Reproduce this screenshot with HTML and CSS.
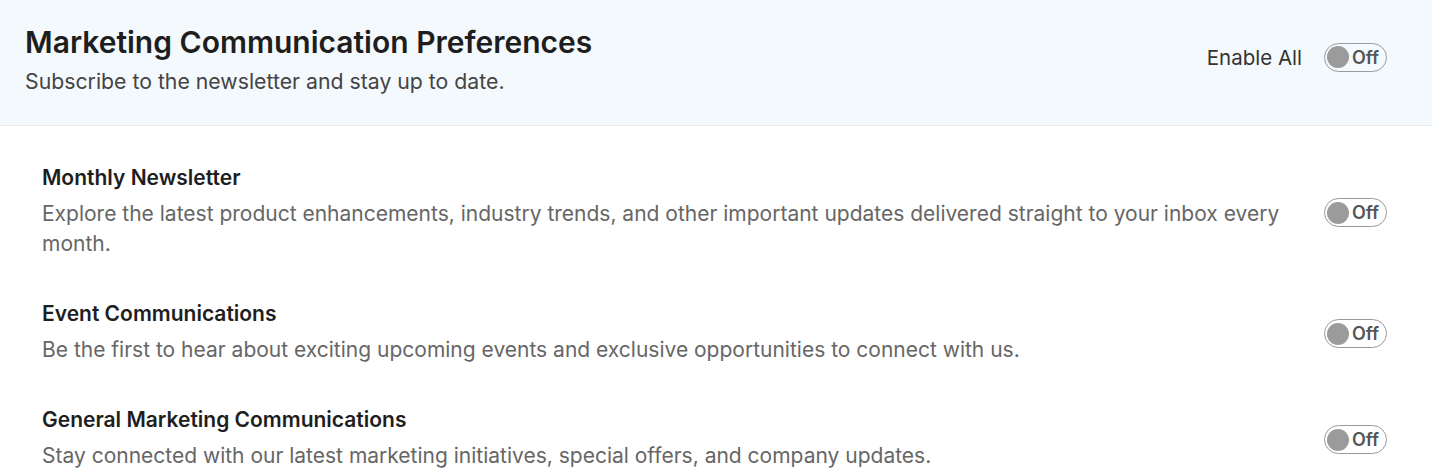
FILE: index.html
```html
<!DOCTYPE html>
<html>
<head>
	<meta charset="utf-8">
	<meta name="viewport" content="width=device-width, initial-scale=1">
	<title>Preferences</title>
	<link rel="stylesheet" href="styles.css">
</head>
<body>

<header class="topC">
	<div class="topTxt">
		<h1>Marketing Communication Preferences</h1>
		<p>Subscribe to the newsletter and stay up to date.</p>
	</div>
	<div class="allC">
		<span>Enable All</span>
		<button class="toggleC"><i></i>Off</button>
	</div>
</header>

<section class="listaC">
	<div class="itemC">
		<div class="itemTxt">
			<h2>Monthly Newsletter</h2>
			<p>Explore the latest product enhancements, industry trends, and other important updates delivered straight to your inbox every month.</p>
		</div>
		<button class="toggleC"><i></i>Off</button>
	</div>
	<div class="itemC">
		<div class="itemTxt">
			<h2>Event Communications</h2>
			<p>Be the first to hear about exciting upcoming events and exclusive opportunities to connect with us.</p>
		</div>
		<button class="toggleC"><i></i>Off</button>
	</div>
	<div class="itemC">
		<div class="itemTxt">
			<h2>General Marketing Communications</h2>
			<p>Stay connected with our latest marketing initiatives, special offers, and company updates.</p>
		</div>
		<button class="toggleC"><i></i>Off</button>
	</div>
</section>

</body>
</html>
```

FILE: styles.css
```css
*,*:after,*:before{border: 0;margin: 0;padding: 0;box-sizing: border-box;}
body{
	font-family: Inter, "Liberation Sans", sans-serif;
	color: #222;
	background: #fff;
}

.topC{
	display: flex;
	align-items: center;
	justify-content: space-between;
	background: #f4f9fd;
	border-bottom: 1px solid #e8eaec;
	height: 126px;
	padding: 0 45px 7px 25px;
}
.topC h1{font-size: 30px; font-weight: 600; line-height: 36px; color: #1e1e1e;}
.topC p{font-size: 21.25px; line-height: 28px; color: #444; margin-top: 7px;}

.allC{display: flex; align-items: center; gap: 22px; font-size: 20.5px; color: #333; margin-top: -4px;}

.toggleC{
	display: flex;
	align-items: center;
	gap: 3px;
	width: 63px;
	height: 29px;
	padding: 0 2px;
	border: 1px solid #9a9a9a;
	border-radius: 15px;
	background: transparent;
	font-family: Inter, "Liberation Sans", sans-serif;
	font-size: 18px;
	font-weight: 600;
	color: #555;
	cursor: pointer;
	flex-shrink: 0;
}
.toggleC i{width: 22px; height: 22px; border-radius: 50%; background: #9b9b9b;}

.listaC{padding: 40px 45px 0 42px;}
.itemC{
	display: flex;
	align-items: center;
	justify-content: space-between;
	gap: 34px;
	margin-bottom: 43px;
}
.itemC:last-child{margin-bottom: 0;}
.itemTxt h2{font-size: 21px; font-weight: 600; line-height: 24px; color: #1e1e1e;}
.itemTxt p{font-size: 21px; line-height: 30px; color: #666; margin-top: 9px;}
```
